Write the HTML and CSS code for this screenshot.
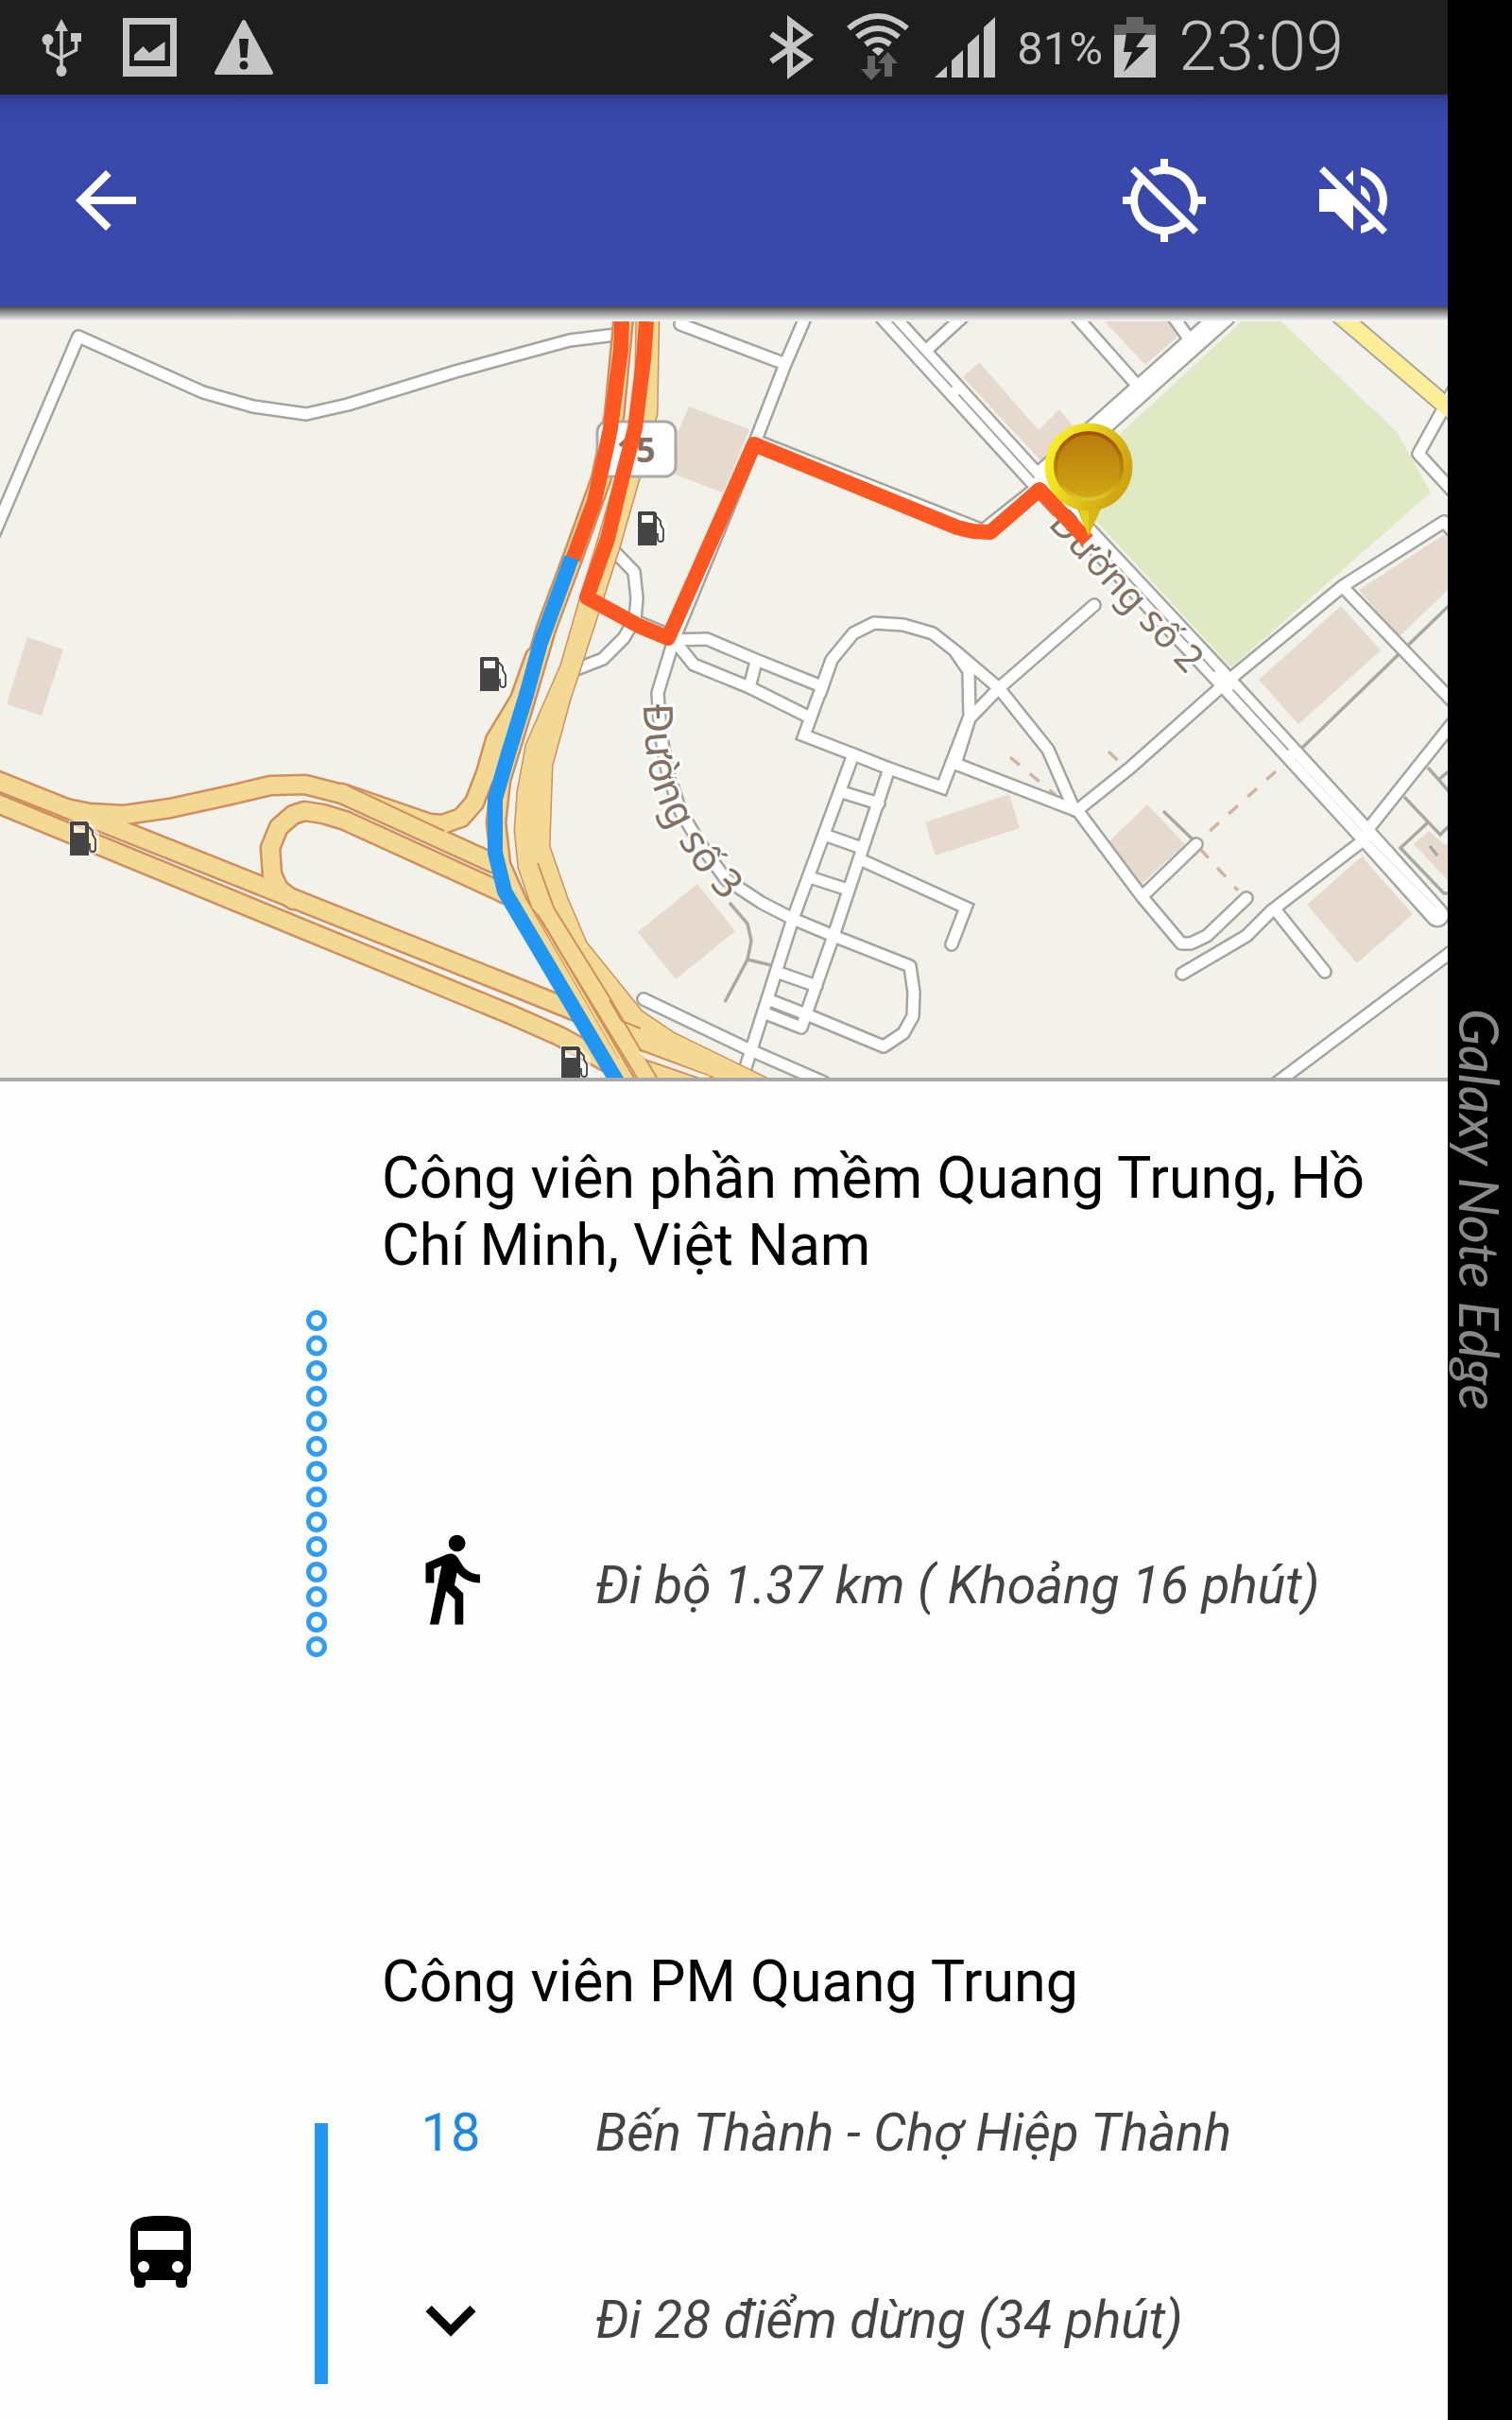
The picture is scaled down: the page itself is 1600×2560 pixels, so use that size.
FILE: index.html
```html
<!DOCTYPE html>
<html lang="vi">
<head>
<meta charset="utf-8">
<meta name="viewport" content="width=device-width, initial-scale=1">
<title>Công viên phần mềm Quang Trung</title>
<link rel="stylesheet" href="styles.css">
</head>
<body>
<div class="device">
<div class="screen">
  <div class="status-bar">
    <div class="status-left">
      <svg width="44" height="64" viewBox="44 18 44 64" aria-hidden="true"><g fill="#c6c6c6"><path d="M65 20l7 13H58z"/><circle cx="50.500" cy="42" r="6"/><path d="M75 35h11v9H75z"/><ellipse cx="65" cy="75" rx="5.500" ry="6"/></g><path d="M65 30V72M50.500 44V55L65 62.500M80.500 42V53L65 61" fill="none" stroke="#c6c6c6" stroke-width="3.500"/></svg>
      <svg width="62" height="62" viewBox="128 19 62 62" aria-hidden="true"><path fill="#c6c6c6" fill-rule="evenodd" d="M132 19h57v62h-57zM139 26v44h43V26zM144 58l9.500-9 6.500 7 16.500-12v20H144z"/></svg>
      <svg width="64" height="62" viewBox="225 19 64 62" aria-hidden="true"><path d="M257 23L228 77h58z" fill="#c6c6c6" stroke="#c6c6c6" stroke-width="4" stroke-linejoin="round"/><path d="M252 41h10l-1.500 20h-7z" fill="#1e1e1e"/><circle cx="257" cy="69" r="4.500" fill="#1e1e1e"/></svg>
    </div>
    <div class="status-right">
      <svg width="68" height="70" viewBox="810 15 68 70" aria-hidden="true"><path d="M818 36L858 63 838 78V22L858 37 818 65" fill="none" stroke="#c6c6c6" stroke-width="6"/></svg>
      <svg width="88" height="74" viewBox="890 13 88 74" aria-hidden="true"><g fill="none" stroke="#c6c6c6" stroke-width="6"><path d="M900 30Q931 4 962 30"/><path d="M909 39Q931 21 953 39"/><path d="M918 47Q931 37 944 47"/></g><path d="M924.500 53Q931 47 937.500 53L931.500 59z" fill="#c6c6c6"/><path d="M920 59h8v14h7l-11 12-11-12h7zM938 81h8V67h6l-10.500-12L931 67h7z" fill="#666"/></svg>
      <svg width="76" height="66" viewBox="990 17 76 66" aria-hidden="true"><path fill="#c6c6c6" d="M991 82l13-12v12zM1009 82V64l12-11v29zM1026 82V47l12-11v46zM1043 82V29l12-11v64z"/></svg>
      <span class="percent">81%</span>
      <svg width="56" height="66" viewBox="1180 16 56 66" aria-hidden="true"><path fill="#646464" d="M1180 36V25h13v-8h18v8h13v11z"/><path fill="#c6c6c6" d="M1180 36h44v45h-44z"/><path fill="#1e1e1e" d="M1193 34h21l-11 15h14l-27 26 9-21h-9z"/></svg>
      <span class="clock">23:09</span>
    </div>
  </div>

  <header class="app-bar">
    <button class="icon-button" type="button" aria-label="Quay lại"><svg width="96" height="96" viewBox="0 0 24 24"><path d="M20 11H7.830l5.590-5.590L12 4l-8 8 8 8 1.410-1.410L7.830 13H20v-2z"/></svg></button>
    <div class="actions">
      <button class="icon-button" type="button" aria-label="Tắt định vị"><svg width="96" height="96" viewBox="0 0 24 24"><path d="M20.940 11c-.46-4.170-3.770-7.480-7.940-7.940V1h-2v2.060c-1.130.12-2.190.46-3.160.97l1.500 1.500C10.160 5.190 11.060 5 12 5c3.870 0 7 3.130 7 7 0 .94-.19 1.840-.52 2.650l1.500 1.500c.5-.96.84-2.020.97-3.150H23v-2h-2.060zM3 4.270l2.040 2.040C3.970 7.620 3.250 9.230 3.060 11H1v2h2.060c.46 4.170 3.770 7.480 7.940 7.940V23h2v-2.060c1.770-.2 3.380-.91 4.690-1.980L19.730 21 21 19.730 4.270 3 3 4.270zm13.270 13.270C15.090 18.450 13.610 19 12 19c-3.870 0-7-3.130-7-7 0-1.610.55-3.090 1.460-4.270l9.810 9.810z"/></svg></button>
      <button class="icon-button" type="button" aria-label="Tắt tiếng"><svg width="96" height="96" viewBox="0 0 24 24"><path d="M16.500 12c0-1.770-1.020-3.290-2.500-4.030v2.210l2.450 2.450c.03-.2.05-.41.05-.63zm2.500 0c0 .94-.2 1.820-.54 2.640l1.510 1.510C20.630 14.910 21 13.500 21 12c0-4.280-2.990-7.860-7-8.770v2.060c2.890.86 5 3.540 5 6.710zM4.270 3L3 4.270 7.730 9H3v6h4l5 5v-6.730l4.250 4.250c-.67.52-1.420.93-2.250 1.180v2.060c1.380-.31 2.630-.95 3.690-1.810L19.730 21 21 19.730l-9-9L4.270 3zM12 4L9.910 6.090 12 8.180V4z"/></svg></button>
    </div>
  </header>
  <div class="bar-shadow"></div>

  <svg class="map" viewBox="0 340 1532 800" role="img" aria-label="Bản đồ tuyến đường">
    <defs>
      <g id="white-roads">
        <path d="M-6 564L0 550 83 356 215 415 268 430 324 438 368 428 482 393 603 360 660 353"/>
        <path d="M720 343L831 385M853 334L831 385 800 465 713 677"/>
        <path d="M802 467L1040 561 1098 515"/>
        <path d="M645 578L671 605 674 633 672 655 660 675 638 697 610 708M672 657L713 674"/>
        <path d="M713 677L748 676 800 698 867 725M713 677L734 703 793 727 853 757M800 700L793 727"/>
        <path d="M713 677L696 733 699 775 706 815 720 858 741 893 768 930 806 955 839 972 882 990 963 1022 967 1050 966 1075 956 1093 935 1107 858 1075 812 1057"/>
        <path stroke-linejoin="miter" stroke-linecap="butt" d="M880 698L851 778 903 798 941 813 997 833 1025 760"/>
        <path d="M868 733L880 698 903 670 925 659 956 661 987 670 1010 688 1057 728 1109 793 1137 857M1010 688L1025 710 1026 760 1011 808 1138 857M1026 760L1057 728 1158 640"/>
        <path d="M903 798L839 972 784 1145M941 813L882 990 848 1087 810 1072M891 838L930 850M875 884L912 897M860 929L897 941M827 1030L864 1043"/>
        <path stroke-linejoin="miter" d="M912 910L1022 960 1007 999"/>
        <path d="M681 1057L792 1110 872 1145"/>
        <path d="M1140 857L1195 813 1302 718 1421 620 1528 552 1545 570M1140 857L1208 948 1250 998 1260 998 1277 990 1319 950M1266 893L1210 947"/>
        <path d="M1251 1030L1319 990 1346 963 1444 888M1350 963L1402 1028M1451 873L1545 755M1345 1150L1545 1000M1423 623L1545 750"/>
        <path d="M1538 413L1501 480 1545 528M984 367L1020 334M1138 334L1201 405M1240 333L1258 358"/>
      </g>
      <g id="wide-roads"><path d="M938 334L1012 415 1097 508 1302 727 1444 882 1521 968M1097 508L1165 450 1295 334"/></g>
      <g id="highways">
        <path d="M-10 823L540 1042 612 1071M-10 847L540 1073 592 1096 690 1150"/>
        <path d="M70 855L95 860 132 862 180 855 244 841 286 831 323 830 362 840 522 913"/>
        <path d="M310 952L295 940 288 925 286 897 295 875 310 862 322 858 342 861 365 868 525 941 535 946"/>
        <path d="M362 839L455 871 468 872 488 865 502 849 514 818 524 783 550 740 566 695"/>
        <path d="M660 334L650 440 636 507 606 590 578 665 553 750 530 825 525 870 530 915 548 955 661 1150"/>
      </g>
      <path id="east-carriageway" d="M674 330L672 440 648 520 632 575 613 637 594 703 557 788 548 837 545 878 549 918 564 962 672 1150 830 1150 713 1093 679 1070 620 997 600 950 581 895 584 810 603 740 612 713 655 580 676 507 695 438 697 330z"/>
      <g id="fuel">
        <path d="M-1-1H20L31 12V33L24 36H-1z" fill="#fff" opacity=".55"/>
        <path fill-rule="evenodd" fill="#444" d="M1 0H18L20 2V36H0V1zM4 4V12H16V4z"/>
        <path d="M19 5L24 10V14L27 19V29Q27 32 24 32 21 32 21 28V24H19" fill="none" stroke="#444" stroke-width="1.800"/>
      </g>
      <linearGradient id="pin-rim" x1="0" x2="1" y1="0" y2=".4"><stop offset="0" stop-color="#fbf62a"/><stop offset=".35" stop-color="#efe21f"/><stop offset=".75" stop-color="#d9b716"/><stop offset="1" stop-color="#d0a50e"/></linearGradient>
      <linearGradient id="pin-face" x1="0" x2="0" y1="0" y2="1"><stop offset="0" stop-color="#b97a0d"/><stop offset="1" stop-color="#d0a812"/></linearGradient>
      <linearGradient id="pin-edge" x1="0" x2="0" y1="0" y2="1"><stop offset="0" stop-color="#a3520a"/><stop offset=".6" stop-color="#b9870f"/><stop offset="1" stop-color="#e0c52e"/></linearGradient>
      <path id="street-2" d="M1108 555L1280 740"/>
      <path id="street-3" d="M681 744Q682 800 690 828T720 893 771 957L790 972"/>
    </defs>
    <path d="M0 340h1532v800H0z" fill="#f2f1ea"/>
    <path fill="#dfeac5" d="M1314 340H1356L1478 457 1514 521 1303 706 1159 550 1187 457z"/>
    <path fill="#e6dacf" d="M29 674L67 687 44 757 7 745zM729 430L793 454 765 521 714 502 717 458zM1019 399L1036 383 1099 455 1121 433 1150 468 1125 490 1101 487zM1169 340H1237L1247 355 1212 386zM1438 624L1532 563V624L1480 674zM1419 641L1461 688 1374 766 1332 719zM738 935L778 985 715 1036 675 986zM979 870L1068 840 1079 876 990 905zM1214 851L1254 893 1208 935 1172 892zM1441 906L1495 967 1436 1019 1383 957zM1512 879L1528 893H1532V931L1496 893z"/>
    <g fill="none" stroke="#cdb6a3" stroke-width="3.500" stroke-dasharray="13 14"><path d="M1069 801L1117 841M1350 816L1268 890M1270 898L1310 942M1173 795L1192 813"/></g>
    <g fill="none" stroke="#a9a9a3" stroke-width="3.500"><path d="M772 955L791 977 795 995 791 1015 767 1060M791 1015L820 1022M1534 640L1377 792M1511 812L1534 838M1522 825L1534 815M1486 843L1524 883 1534 873M1511 870L1482 897 1528 945H1534M1231 858L1262 888M1513 895L1521 905"/></g>
    <g fill="none" stroke-linecap="round" stroke-linejoin="round">
      <g stroke="#a5a5a0"><use href="#white-roads" stroke-width="16"/><use href="#wide-roads" stroke-width="27"/><path d="M1415 331L1545 442" stroke-width="21"/></g>
      <g stroke="#fff"><use href="#white-roads" stroke-width="11"/><use href="#wide-roads" stroke-width="22"/></g>
      <path d="M1415 331L1545 442" stroke="#fdee97" stroke-width="17"/>
      <path d="M944 340L1007 409M1015 418L1094 505M1170 586L1285 710M1305 730L1363 793" stroke="#a9a9a3" stroke-width="2"/>
      <path d="M1371 803L1442 880M1450 890L1520 960" stroke="#dededa"/>
      <g stroke="#d08f5f"><use href="#highways" stroke-width="23"/><use href="#east-carriageway" fill="#d08f5f" stroke-width="3"/></g>
      <g stroke="#f3d993"><use href="#highways" stroke-width="18"/></g>
    </g>
    <use href="#east-carriageway" fill="#f3d993"/>
    <g fill="none" stroke="#d08f5f" stroke-width="2">
      <path d="M368 831L470 879M569 913L586 960 645 1055 695 1140M569 968L674 1140" />
      <path d="M574 975L671 1140M564 962L574 975M676 1110L755 1140M683 1121L738 1140M645 1058L658 1080 678 1088"/>
    </g>
    <path d="M676 1112L683 1120 738 1139H752z" fill="#f7efe6"/>
    <rect x="632" y="446" width="83" height="58" rx="11" fill="#fff" stroke="#aaa9a8" stroke-width="3"/>
    <text class="badge-text" x="673" y="489" text-anchor="middle">15</text>
    <use href="#fuel" x="675" y="541"/><use href="#fuel" x="508" y="695"/><use href="#fuel" x="74" y="869"/><use href="#fuel" x="594" y="1107"/>
    <text class="street"><textPath href="#street-2">Đường số 2</textPath></text>
    <text class="street curved"><textPath href="#street-3">Đường số 3</textPath></text>
    <g fill="none" stroke-width="16" stroke-linejoin="round">
      <path stroke="#ff5722" d="M658 340L657 370 646 453 641 477 629 530 606 592M684 340L681 380 672 453 658 507 643 570 621 632 676 662 707 675 798 470 1013 558 1030 562 1048 563 1100 518 1151 572"/>
      <path stroke="#2196f3" d="M605 590L572 680 557 735 538 797 524 845V902L534 943 653 1144"/>
    </g>
    <path d="M1138 534L1152 567 1167 534z" fill="#d9b716"/>
    <path d="M1140 534L1152 567V534z" fill="#e3d21c"/>
    <circle cx="1152" cy="494" r="46.500" fill="url(#pin-rim)"/>
    <circle cx="1152" cy="493" r="35" fill="url(#pin-face)" stroke="url(#pin-edge)" stroke-width="4"/>
  </svg>

  <main class="route">
    <h2 class="stop">Công viên phần mềm Quang Trung, Hồ Chí Minh, Việt Nam</h2>
    <section class="leg walk">
      <svg class="track" width="24" height="367" aria-hidden="true">
        <g fill="none" stroke="#2f9df4" stroke-width="5">
          <circle cx="12" cy="11" r="8.500"/><circle cx="12" cy="37.500" r="8.500"/><circle cx="12" cy="64" r="8.500"/><circle cx="12" cy="91" r="8.500"/><circle cx="12" cy="117.500" r="8.500"/><circle cx="12" cy="144" r="8.500"/><circle cx="12" cy="170.500" r="8.500"/><circle cx="12" cy="197.500" r="8.500"/><circle cx="12" cy="224" r="8.500"/><circle cx="12" cy="250" r="8.500"/><circle cx="12" cy="277" r="8.500"/><circle cx="12" cy="303" r="8.500"/><circle cx="12" cy="330" r="8.500"/><circle cx="12" cy="356" r="8.500"/>
        </g>
      </svg>
      <svg class="kind" width="106" height="106" viewBox="0 0 24 24" aria-hidden="true"><path d="M13.500 5.500c1.100 0 2-.9 2-2s-.9-2-2-2-2 .9-2 2 .9 2 2 2zM9.800 8.900L7 23h2.100l1.800-8 2.100 2v6h2v-7.500l-2.100-2 .6-3C14.800 12 16.800 13 19 13v-2c-1.900 0-3.500-1-4.300-2.400l-1-1.600c-.4-.6-1-1-1.700-1-.3 0-.5.1-.8.1L6 8.300V13h2V9.600l1.800-.7"/></svg>
      <p class="info">Đi bộ 1.37 km ( Khoảng 16 phút)</p>
    </section>
    <h2 class="stop">Công viên PM Quang Trung</h2>
    <section class="leg bus">
      <svg class="mode" width="96" height="96" viewBox="0 0 24 24" aria-hidden="true"><path d="M4 16c0 .88.39 1.670 1 2.220V20c0 .55.45 1 1 1h1c.55 0 1-.45 1-1v-1h8v1c0 .55.45 1 1 1h1c.55 0 1-.45 1-1v-1.780c.61-.55 1-1.340 1-2.220V6c0-3.500-3.580-4-8-4s-8 .5-8 4v10zm3.500 1c-.83 0-1.500-.67-1.500-1.500S6.670 14 7.500 14s1.500.67 1.500 1.500S8.330 17 7.500 17zm9 0c-.83 0-1.500-.67-1.500-1.500s.67-1.500 1.500-1.500 1.500.67 1.500 1.500-.67 1.500-1.500 1.500zm1.500-6H6V6h12v5z"/></svg>
      <div class="track line"></div>
      <span class="kind number">18</span>
      <p class="info">Bến Thành - Chợ Hiệp Thành</p>
      <button class="kind expand" type="button" aria-label="Xem các điểm dừng"><svg width="106" height="106" viewBox="0 0 24 24"><path d="M16.590 8.590L12 13.170 7.410 8.590 6 10l6 6 6-6z"/></svg></button>
      <p class="info">Đi 28 điểm dừng (34 phút)</p>
    </section>
  </main>
</div>
<aside class="edge"><span>Galaxy Note Edge</span></aside>
</div>
</body>
</html>
```

FILE: styles.css
```css
* { box-sizing: border-box; }
body {
  margin: 0;
  background: #000;
  color: #000;
  font-family: Roboto, "Noto Sans", sans-serif;
}
svg { display: block; flex: none; }
h2, p { margin: 0; font-weight: 400; }
button { padding: 0; border: 0; background: none; color: inherit; cursor: pointer; }

.device {
  display: grid;
  grid-template-columns: minmax(0, 1fr) 68px;
  min-height: 100vh;
}
.screen {
  display: flex;
  flex-direction: column;
  background: #fefefe;
}

.status-bar {
  display: flex;
  align-items: center;
  justify-content: space-between;
  height: 100px;
  padding: 0 110px 0 44px;
  background: #1e1e1e;
  color: #c0c0c0;
}
.status-left { display: flex; align-items: center; gap: 38px; }
.status-right { display: flex; align-items: center; gap: 12px; }
.percent { font-size: 49px; line-height: 60px; padding-top: 3px; }
.clock { font-size: 72px; line-height: 84px; font-weight: 300; }

.app-bar {
  display: flex;
  align-items: center;
  justify-content: space-between;
  height: 224px;
  padding: 0 52px 0 64px;
  background: linear-gradient(rgba(0, 0, 0, .25), rgba(0, 0, 0, .08) 8px, transparent 28px) #3949ab;
}
.icon-button { fill: #fff; }
.actions { display: flex; gap: 104px; }
.bar-shadow {
  height: 16px;
  background: linear-gradient(#4c4c4c, #fafafa);
}

.map { width: 100%; height: auto; }
.street {
  font: 40px "Noto Sans", sans-serif;
  fill: #84705f;
  stroke: #fff;
  stroke-width: 6px;
  stroke-linejoin: round;
  paint-order: stroke;
}
.curved { font-size: 43px; }
.badge-text { font: 700 36px "Noto Sans", sans-serif; fill: #84705f; }

.route {
  flex: 1;
  padding: 67px 0 38px;
  border-top: 4px solid #aaa;
}
.stop {
  padding: 0 60px 0 404px;
  font-size: 61px;
  line-height: 71px;
}
.leg {
  display: grid;
  grid-template-columns: 304px 43px 77px 106px 100px minmax(0, 1fr);
}
.mode { grid-column: 1; grid-row: 1 / 3; align-self: center; margin: 23px 0 -15px 122px; }
.track { grid-column: 2; justify-self: end; }
.kind { grid-column: 4; }
.info {
  grid-column: 6;
  color: #444;
  font-size: 55px;
  line-height: 66px;
  font-style: italic;
}

.walk { align-items: end; margin: 33px 0 308px; }
.walk .kind { margin-bottom: 30px; }
.walk .info { margin-bottom: 43px; }

.bus { align-items: center; row-gap: 112px; margin-top: 91px; }
.bus .kind, .bus .info { align-self: center; }
.line {
  grid-row: 1 / 3;
  align-self: stretch;
  width: 14px;
  margin: 23px 0 -15px;
  background: #2196f3;
}
.number {
  color: #1e88e5;
  font-size: 56px;
  line-height: 66px;
  text-align: center;
}

.edge {
  display: flex;
  align-items: center;
  justify-content: center;
  background: #000;
  color: #888;
}
.edge span {
  writing-mode: vertical-rl;
  font: italic 58px/68px Lato, sans-serif;
}
```
